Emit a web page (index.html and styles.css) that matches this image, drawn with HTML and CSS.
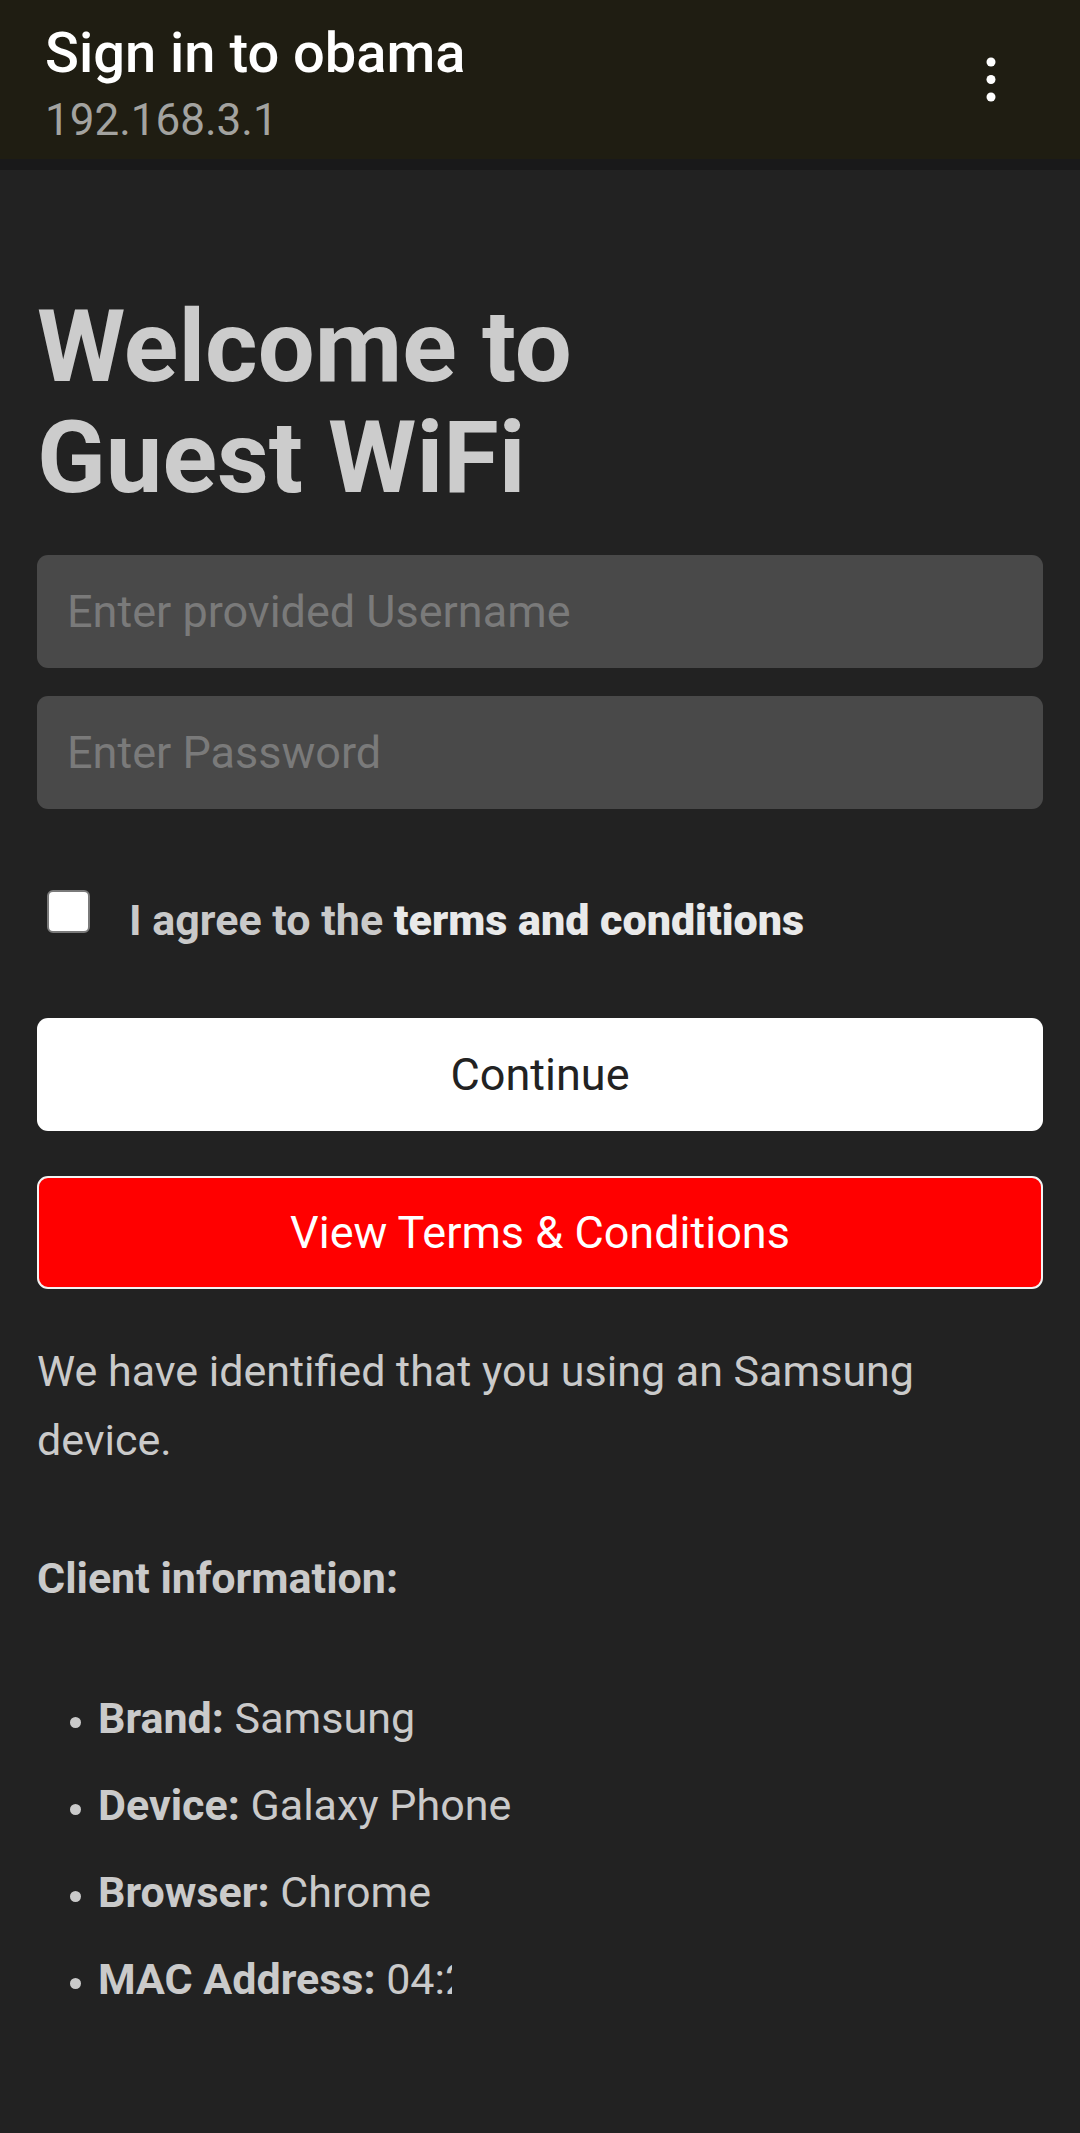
FILE: index.html
```html
<!DOCTYPE html>
<html lang="en">
<head>
<meta charset="utf-8">
<title>Sign in to obama</title>
<link rel="stylesheet" href="styles.css">
</head>
<body>
<header class="appbar">
  <div class="appbar-titles">
    <div class="appbar-title">Sign in to obama</div>
    <div class="appbar-sub">192.168.3.1</div>
  </div>
  <svg class="appbar-menu" width="24" height="60" viewBox="0 0 24 60" aria-hidden="true">
    <circle cx="12" cy="12" r="4.5" fill="#ffffff"/>
    <circle cx="12" cy="29.5" r="4.5" fill="#ffffff"/>
    <circle cx="12" cy="47" r="4.5" fill="#ffffff"/>
  </svg>
</header>
<div class="appbar-shadow"></div>
<main class="content">
  <h1 class="welcome">Welcome to<br>Guest WiFi</h1>
  <form class="login">
    <input class="field" type="text" placeholder="Enter provided Username">
    <input class="field field-pass" type="password" placeholder="Enter Password">
    <label class="agree">
      <span class="agree-box"></span>
      <span class="agree-text">I agree to the <b>terms and conditions</b></span>
    </label>
    <button type="button" class="btn btn-continue">Continue</button>
    <button type="button" class="btn btn-terms">View Terms &amp; Conditions</button>
  </form>
  <p class="info">We have identified that you using an Samsung device.<br><br><b>Client information:</b></p>
  <ul class="client">
    <li><b>Brand:</b> Samsung</li>
    <li><b>Device:</b> Galaxy Phone</li>
    <li><b>Browser:</b> Chrome</li>
    <li><b>MAC Address:</b> <span class="mac">04:2B:8F:11:7C:3A</span></li>
  </ul>
</main>
</body>
</html>
```
FILE: styles.css
```css
* { box-sizing: border-box; }

html, body {
  margin: 0;
  padding: 0;
  background: #222222;
}

body {
  font-family: Roboto, "Liberation Sans", Arial, sans-serif;
  color: #cacaca;
  font-size: 43px;
  line-height: 69px;
  min-height: 2133px;
}

.appbar {
  height: 159px;
  background: #1f1d12;
  display: flex;
  justify-content: space-between;
  align-items: flex-start;
  padding: 21px 77px 0 45px;
}

.appbar-title {
  font-size: 56px;
  line-height: 64px;
  font-weight: 500;
  color: #ffffff;
  margin-bottom: 7px;
}

.appbar-sub {
  font-size: 44px;
  line-height: 56px;
  color: #a3a3a0;
}

.appbar-menu {
  display: block;
  margin-top: 29px;
}

.appbar-shadow {
  height: 11px;
  background: #19191a;
}

.content {
  padding: 0 37px;
}

.welcome {
  margin: 121px 0 42px;
  font-size: 101px;
  line-height: 111px;
  font-weight: 700;
  color: #cccccc;
}

.login {
  display: flex;
  flex-direction: column;
}

.field {
  display: block;
  width: 100%;
  height: 113px;
  border: none;
  border-radius: 11px;
  background: #494949;
  padding: 0 30px;
  font-family: inherit;
  font-size: 45px;
  color: #dddddd;
  outline: none;
}

.field::placeholder {
  color: #7a7a7a;
}

.field-pass {
  margin-top: 28px;
}

.agree {
  display: flex;
  align-items: flex-start;
  margin-top: 77px;
  padding-left: 10px;
  height: 69px;
}

.agree-box {
  width: 43px;
  height: 43px;
  margin-top: 4px;
  background: #ffffff;
  border: 2px solid #7a7a7a;
  border-radius: 6px;
  flex: none;
}

.agree-text {
  margin-left: 39px;
  font-weight: 700;
  color: #c9c9c9;
  white-space: nowrap;
}

.agree-text b {
  color: #e9e9e9;
}

.btn {
  display: block;
  width: 100%;
  height: 113px;
  border-radius: 11px;
  font-family: inherit;
  font-size: 45px;
  line-height: 1;
  padding: 0;
  cursor: pointer;
}

.btn-continue {
  margin-top: 63px;
  background: #ffffff;
  color: #222222;
  border: none;
}

.btn-terms {
  margin-top: 45px;
  background: #ff0000;
  color: #ffffff;
  border: 2px solid #f2f2f2;
}

.info {
  margin: 48px 0 0;
  color: #cacaca;
}

.info b {
  font-weight: 700;
}

.client {
  margin: 71px 0 0;
  padding: 0 0 0 61px;
  color: #cacaca;
}

.client li {
  margin-bottom: 18px;
}

.client li::marker {
  font-size: 34px;
}

.mac {
  display: inline-block;
  width: 66px;
  overflow: hidden;
  white-space: nowrap;
  vertical-align: top;
}
```
